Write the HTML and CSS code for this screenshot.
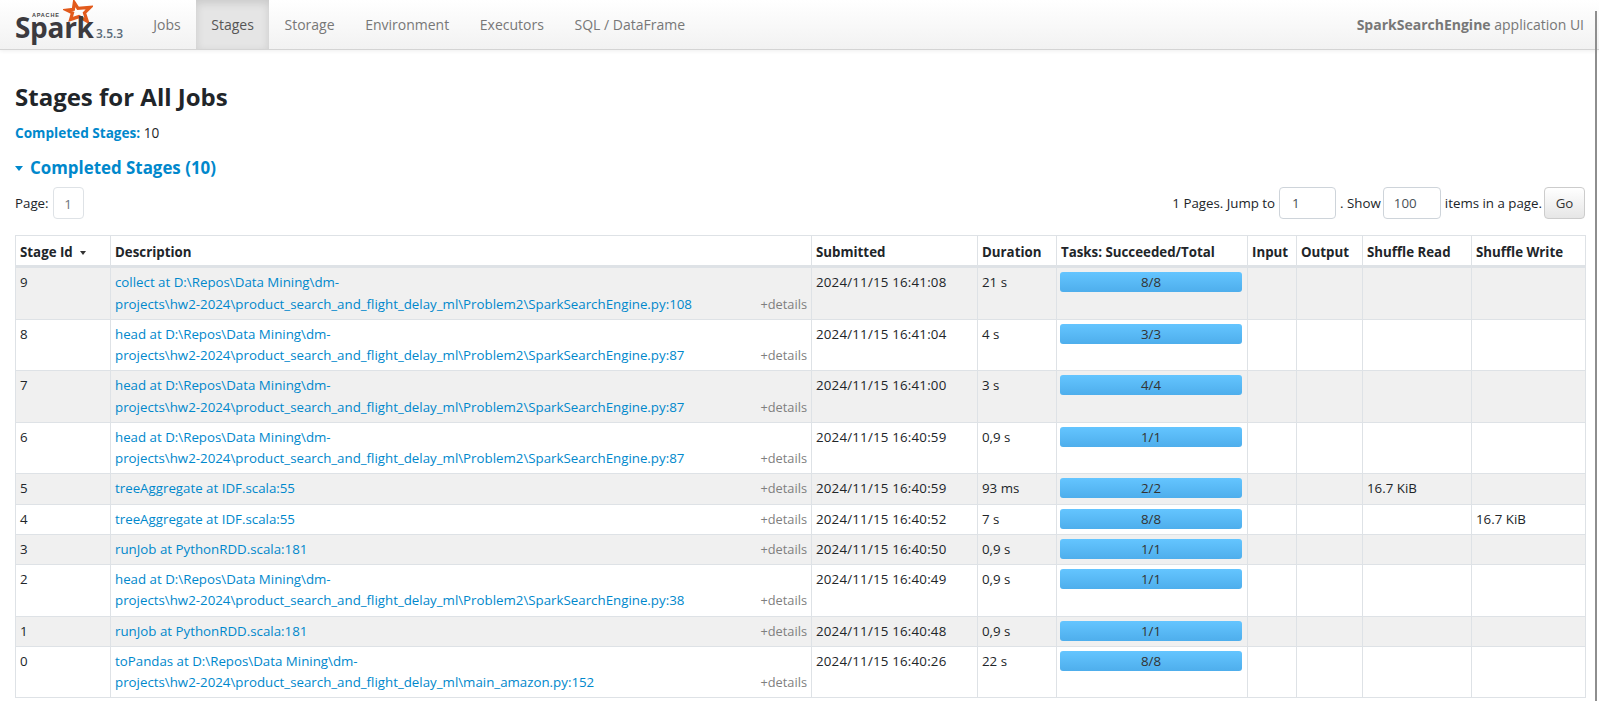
FILE: index.html
```html
<!DOCTYPE html>
<html lang="en">
<head>
  <meta charset="UTF-8">
  <title>SparkSearchEngine - Stages for All Jobs</title>
  <link rel="stylesheet" href="styles.css">
</head>
<body>
  <nav class="navbar">
    <a class="brand" href="#">
      <span class="logo">
        <svg class="logo-star" viewBox="0 0 32 26" width="30" height="24">
          <path d="M12 3 L16 9 L29 8 L23 14 L26 23 L17 18 L8 21 L10 14 L4 11 L11 10 Z" fill="none" stroke="#e25a1c" stroke-width="3.5"/>
        </svg>
        <span class="logo-apache">APACHE</span>
        <span class="logo-spark">Spark</span>
      </span>
      <span class="version">3.5.3</span>
    </a>
    <ul class="nav-items">
      <li><a href="#">Jobs</a></li>
      <li class="active"><a href="#">Stages</a></li>
      <li><a href="#">Storage</a></li>
      <li><a href="#">Environment</a></li>
      <li><a href="#">Executors</a></li>
      <li><a href="#">SQL / DataFrame</a></li>
    </ul>
    <span class="app-name"><strong>SparkSearchEngine</strong> application UI</span>
  </nav>

  <div class="scroll-thumb"></div>

  <div class="content">
    <h3>Stages for All Jobs</h3>
    <p class="summary"><a href="#"><strong>Completed Stages:</strong></a> 10</p>
    <h4 class="collapse-title"><span class="arrow"></span><a href="#">Completed Stages (10)</a></h4>

    <div class="paging">
      <div class="page-left">
        <span>Page:</span>
        <span class="page-num">1</span>
      </div>
      <form class="page-form">
        <span>1 Pages. Jump to</span>
        <input class="page-input jump" type="text" value="1">
        <span>. Show</span>
        <input class="page-input show" type="text" value="100">
        <span>items in a page.</span>
        <button class="go-btn" type="button">Go</button>
      </form>
    </div>

    <table class="stages">
      <colgroup>
        <col class="c-id"><col class="c-desc"><col class="c-sub"><col class="c-dur"><col class="c-tasks"><col class="c-in"><col class="c-out"><col class="c-read"><col class="c-write">
      </colgroup>
      <thead>
        <tr>
          <th>Stage Id <span class="sort"></span></th>
          <th>Description</th>
          <th>Submitted</th>
          <th>Duration</th>
          <th>Tasks: Succeeded/Total</th>
          <th>Input</th>
          <th>Output</th>
          <th>Shuffle Read</th>
          <th>Shuffle Write</th>
        </tr>
      </thead>
      <tbody>
        <tr>
          <td>9</td>
          <td><a href="#">collect at D:\Repos\Data Mining\dm-<span class="path">projects\hw2-2024\product_search_and_flight_delay_ml\Problem2\SparkSearchEngine.py:108</span></a><span class="details">+details</span></td>
          <td class="date">2024/11/15 16:41:08</td><td>21 s</td>
          <td><div class="progress">8/8</div></td>
          <td></td><td></td><td></td><td></td>
        </tr>
        <tr>
          <td>8</td>
          <td><a href="#">head at D:\Repos\Data Mining\dm-<span class="path">projects\hw2-2024\product_search_and_flight_delay_ml\Problem2\SparkSearchEngine.py:87</span></a><span class="details">+details</span></td>
          <td class="date">2024/11/15 16:41:04</td><td>4 s</td>
          <td><div class="progress">3/3</div></td>
          <td></td><td></td><td></td><td></td>
        </tr>
        <tr>
          <td>7</td>
          <td><a href="#">head at D:\Repos\Data Mining\dm-<span class="path">projects\hw2-2024\product_search_and_flight_delay_ml\Problem2\SparkSearchEngine.py:87</span></a><span class="details">+details</span></td>
          <td class="date">2024/11/15 16:41:00</td><td>3 s</td>
          <td><div class="progress">4/4</div></td>
          <td></td><td></td><td></td><td></td>
        </tr>
        <tr>
          <td>6</td>
          <td><a href="#">head at D:\Repos\Data Mining\dm-<span class="path">projects\hw2-2024\product_search_and_flight_delay_ml\Problem2\SparkSearchEngine.py:87</span></a><span class="details">+details</span></td>
          <td class="date">2024/11/15 16:40:59</td><td>0,9 s</td>
          <td><div class="progress">1/1</div></td>
          <td></td><td></td><td></td><td></td>
        </tr>
        <tr>
          <td>5</td>
          <td><a href="#">treeAggregate at IDF.scala:55</a><span class="details">+details</span></td>
          <td class="date">2024/11/15 16:40:59</td><td>93 ms</td>
          <td><div class="progress">2/2</div></td>
          <td></td><td></td><td>16.7 KiB</td><td></td>
        </tr>
        <tr>
          <td>4</td>
          <td><a href="#">treeAggregate at IDF.scala:55</a><span class="details">+details</span></td>
          <td class="date">2024/11/15 16:40:52</td><td>7 s</td>
          <td><div class="progress">8/8</div></td>
          <td></td><td></td><td></td><td>16.7 KiB</td>
        </tr>
        <tr>
          <td>3</td>
          <td><a href="#">runJob at PythonRDD.scala:181</a><span class="details">+details</span></td>
          <td class="date">2024/11/15 16:40:50</td><td>0,9 s</td>
          <td><div class="progress">1/1</div></td>
          <td></td><td></td><td></td><td></td>
        </tr>
        <tr>
          <td>2</td>
          <td><a href="#">head at D:\Repos\Data Mining\dm-<span class="path">projects\hw2-2024\product_search_and_flight_delay_ml\Problem2\SparkSearchEngine.py:38</span></a><span class="details">+details</span></td>
          <td class="date">2024/11/15 16:40:49</td><td>0,9 s</td>
          <td><div class="progress">1/1</div></td>
          <td></td><td></td><td></td><td></td>
        </tr>
        <tr>
          <td>1</td>
          <td><a href="#">runJob at PythonRDD.scala:181</a><span class="details">+details</span></td>
          <td class="date">2024/11/15 16:40:48</td><td>0,9 s</td>
          <td><div class="progress">1/1</div></td>
          <td></td><td></td><td></td><td></td>
        </tr>
        <tr>
          <td>0</td>
          <td><a href="#">toPandas at D:\Repos\Data Mining\dm-<span class="path">projects\hw2-2024\product_search_and_flight_delay_ml\main_amazon.py:152</span></a><span class="details">+details</span></td>
          <td class="date">2024/11/15 16:40:26</td><td>22 s</td>
          <td><div class="progress">8/8</div></td>
          <td></td><td></td><td></td><td></td>
        </tr>
      </tbody>
    </table>
  </div>
</body>
</html>
```

FILE: styles.css
```css
* {
  box-sizing: border-box;
}

body {
  margin: 0;
  font-family: "Open Sans", "Noto Sans", sans-serif;
  font-size: 13.3px;
  line-height: 21px;
  color: #212529;
  background-color: #fff;
}

a {
  color: #0088cc;
  text-decoration: none;
}

/* top bar */
.navbar {
  display: flex;
  align-items: stretch;
  height: 50px;
  padding-right: 15px;
  background: linear-gradient(to bottom, #ffffff, #f2f2f2);
  border-bottom: 1px solid #d4d4d4;
  box-shadow: 0 1px 4px rgba(0, 0, 0, 0.07);
}

.brand {
  display: flex;
  width: 138px;
  padding-left: 15px;
}

.logo {
  position: relative;
  display: block;
  flex: none;
  width: 81px;
  height: 48px;
}

.logo-star {
  position: absolute;
  left: 48px;
  top: 0;
}

.logo-apache {
  position: absolute;
  left: 17px;
  top: 12px;
  font-family: "Liberation Sans", sans-serif;
  font-size: 5.5px;
  line-height: 6px;
  font-weight: bold;
  letter-spacing: 0.8px;
  color: #444;
}

.logo-spark {
  position: absolute;
  left: 0;
  top: 18px;
  font-family: "Open Sans", sans-serif;
  font-size: 28px;
  line-height: 19px;
  font-weight: 700;
  letter-spacing: -0.3px;
  color: #3c3a3e;
}

.version {
  margin: 23px 0 0 0;
  font-size: 12px;
  font-weight: 600;
  color: #5a6a78;
}

.nav-items {
  display: flex;
  margin: 0;
  padding: 0;
  list-style: none;
}

.nav-items a {
  display: block;
  height: 49px;
  padding: 14px 15.3px;
  font-size: 14px;
  color: #777;
}

.nav-items .active a {
  color: #555;
  background-color: #e5e5e5;
  box-shadow: inset 0 3px 8px rgba(0, 0, 0, 0.125);
}

.app-name {
  margin-left: auto;
  align-self: center;
  font-size: 14px;
  color: #777;
}

.scroll-thumb {
  position: absolute;
  top: 11px;
  right: 2px;
  width: 2px;
  height: 690px;
  background-color: #8e8e8e;
}

/* page content */
.content {
  padding: 0 14px 0 15px;
}

h3 {
  margin: 32px 0 0;
  font-size: 24px;
  line-height: 30px;
  font-weight: bold;
}

.summary {
  margin: 10px 0 0;
  font-size: 13.6px;
}

.summary strong {
  font-weight: bold;
}

.collapse-title {
  display: flex;
  align-items: center;
  margin: 12px 0 0;
  font-size: 16.9px;
  line-height: 26px;
  font-weight: bold;
}

.arrow {
  width: 0;
  height: 0;
  margin-right: 7px;
  border-left: 4.5px solid transparent;
  border-right: 4.5px solid transparent;
  border-top: 5px solid #0088cc;
}

.paging {
  display: flex;
  justify-content: space-between;
  align-items: center;
  height: 32px;
  margin-top: 6px;
}

.page-left {
  display: flex;
  align-items: center;
  gap: 4px;
}

.page-num {
  width: 31px;
  height: 32px;
  line-height: 32px;
  text-align: center;
  color: #6c757d;
  border: 1px solid #dee2e6;
  border-radius: 4px;
}

.page-form {
  display: flex;
  align-items: center;
  gap: 4px;
  margin: 0;
}

.page-input {
  height: 32px;
  padding: 0 10px;
  font: inherit;
  color: #495057;
  border: 1px solid #ced4da;
  border-radius: 4px;
}

.page-input.jump {
  width: 57px;
  padding-left: 12px;
}

.page-input.show {
  width: 58px;
  margin-left: -2px;
}

.go-btn {
  width: 41px;
  height: 32px;
  margin-left: -2px;
  padding: 0;
  font: inherit;
  color: #333;
  background: linear-gradient(to bottom, #ffffff, #e6e6e6);
  border: 1px solid #ccc;
  border-radius: 4px;
}

/* stage table */
.stages {
  width: 100%;
  margin-top: 16px;
  table-layout: fixed;
  border-collapse: collapse;
  border: 1px solid #dee2e6;
  line-height: 21.25px;
}

.c-id { width: 95px; }
.c-desc { width: 701px; }
.c-sub { width: 166px; }
.c-dur { width: 79px; }
.c-tasks { width: 191px; }
.c-in { width: 49px; }
.c-out { width: 66px; }
.c-read { width: 109px; }
.c-write { width: 114px; }

.stages th,
.stages td {
  padding: 4px;
  vertical-align: top;
  text-align: left;
  border: 1px solid #dee2e6;
}

.stages th {
  padding-top: 6px;
  padding-bottom: 2px;
  font-weight: bold;
  border-bottom-width: 3px;
}

.stages tbody tr:nth-child(odd) {
  background-color: #f0f0f0;
}

.stages .date {
  letter-spacing: 0.2px;
}

.path {
  white-space: nowrap;
}

.sort {
  display: inline-block;
  margin-left: 4px;
  vertical-align: middle;
  border-left: 3px solid transparent;
  border-right: 3px solid transparent;
  border-top: 4px solid #333;
}

.details {
  float: right;
  font-size: 12.8px;
  color: #7f7f7f;
}

.progress {
  height: 20px;
  margin: 0 1px 0 -1px;
  line-height: 20px;
  text-align: center;
  color: #333;
  background: linear-gradient(to bottom, #64c5ff, #4eaeec);
  border-radius: 3px;
}
```
